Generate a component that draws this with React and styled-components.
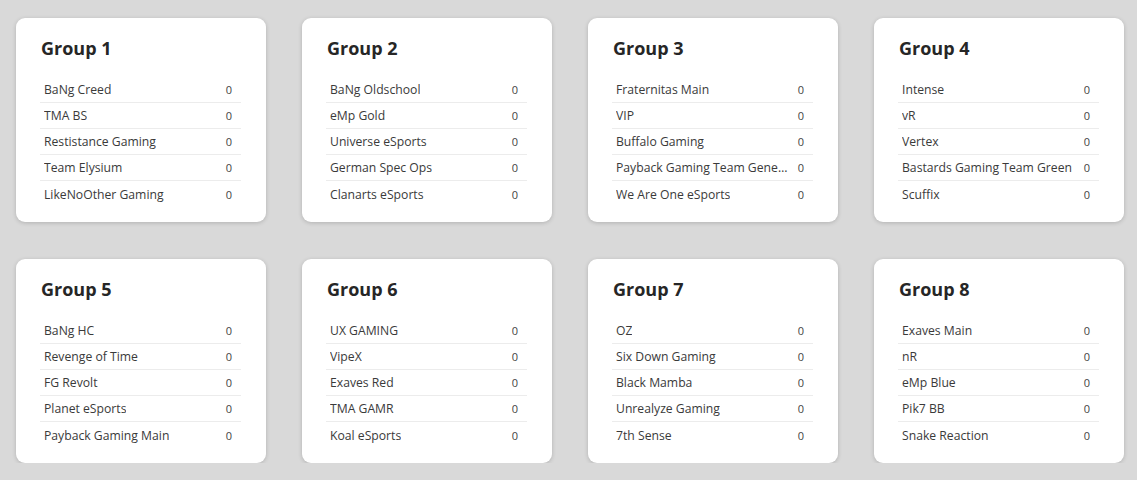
import styled, { createGlobalStyle } from "styled-components";

const GlobalStyle = createGlobalStyle`
  html, body {
    margin: 0;
    padding: 0;
    background: #d9d9d9;
    font-family: "Open Sans", "Noto Sans", sans-serif;
    color: #333;
  }
`;

const Page = styled.div`
  display: grid;
  grid-template-columns: repeat(4, 250px);
  column-gap: 36px;
  row-gap: 37px;
  padding: 18px 0 0 16px;
`;

const Card = styled.section`
  background: #fff;
  border-radius: 9px;
  box-shadow: 0 1px 4px rgba(0, 0, 0, 0.18);
  padding: 17px 25px 17px 24px;
  height: 204px;
  box-sizing: border-box;
`;

const Title = styled.h2`
  margin: 0 0 16px 1px;
  font-size: 18px;
  font-weight: 700;
  line-height: 26px;
  color: #262626;
`;

const List = styled.ul`
  list-style: none;
  margin: 0;
  padding: 0;
`;

const Row = styled.li`
  display: flex;
  align-items: center;
  justify-content: space-between;
  gap: 9px;
  height: 26px;
  padding: 0 9px 0 4px;
  font-size: 12.2px;
  color: #3a3a3a;
  border-bottom: 1px solid #ececec;
  box-sizing: border-box;
  &:last-child {
    border-bottom: none;
  }
`;

const Name = styled.span`
  white-space: nowrap;
  overflow: hidden;
  text-overflow: ellipsis;
`;

const Score = styled.span`
  flex-shrink: 0;
  font-size: 11px;
  color: #444;
`;

const groups = [
  ["BaNg Creed", "TMA BS", "Restistance Gaming", "Team Elysium", "LikeNoOther Gaming"],
  ["BaNg Oldschool", "eMp Gold", "Universe eSports", "German Spec Ops", "Clanarts eSports"],
  ["Fraternitas Main", "VIP", "Buffalo Gaming", "Payback Gaming Team General", "We Are One eSports"],
  ["Intense", "vR", "Vertex", "Bastards Gaming Team Green", "Scuffix"],
  ["BaNg HC", "Revenge of Time", "FG Revolt", "Planet eSports", "Payback Gaming Main"],
  ["UX GAMING", "VipeX", "Exaves Red", "TMA GAMR", "Koal eSports"],
  ["OZ", "Six Down Gaming", "Black Mamba", "Unrealyze Gaming", "7th Sense"],
  ["Exaves Main", "nR", "eMp Blue", "Pik7 BB", "Snake Reaction"],
];

export default function App() {
  return (
    <>
      <GlobalStyle />
      <Page>
        {groups.map((teams, i) => (
          <Card key={i}>
            <Title>Group {i + 1}</Title>
            <List>
              {teams.map((team) => (
                <Row key={team}>
                  <Name>{team}</Name>
                  <Score>0</Score>
                </Row>
              ))}
            </List>
          </Card>
        ))}
      </Page>
    </>
  );
}
